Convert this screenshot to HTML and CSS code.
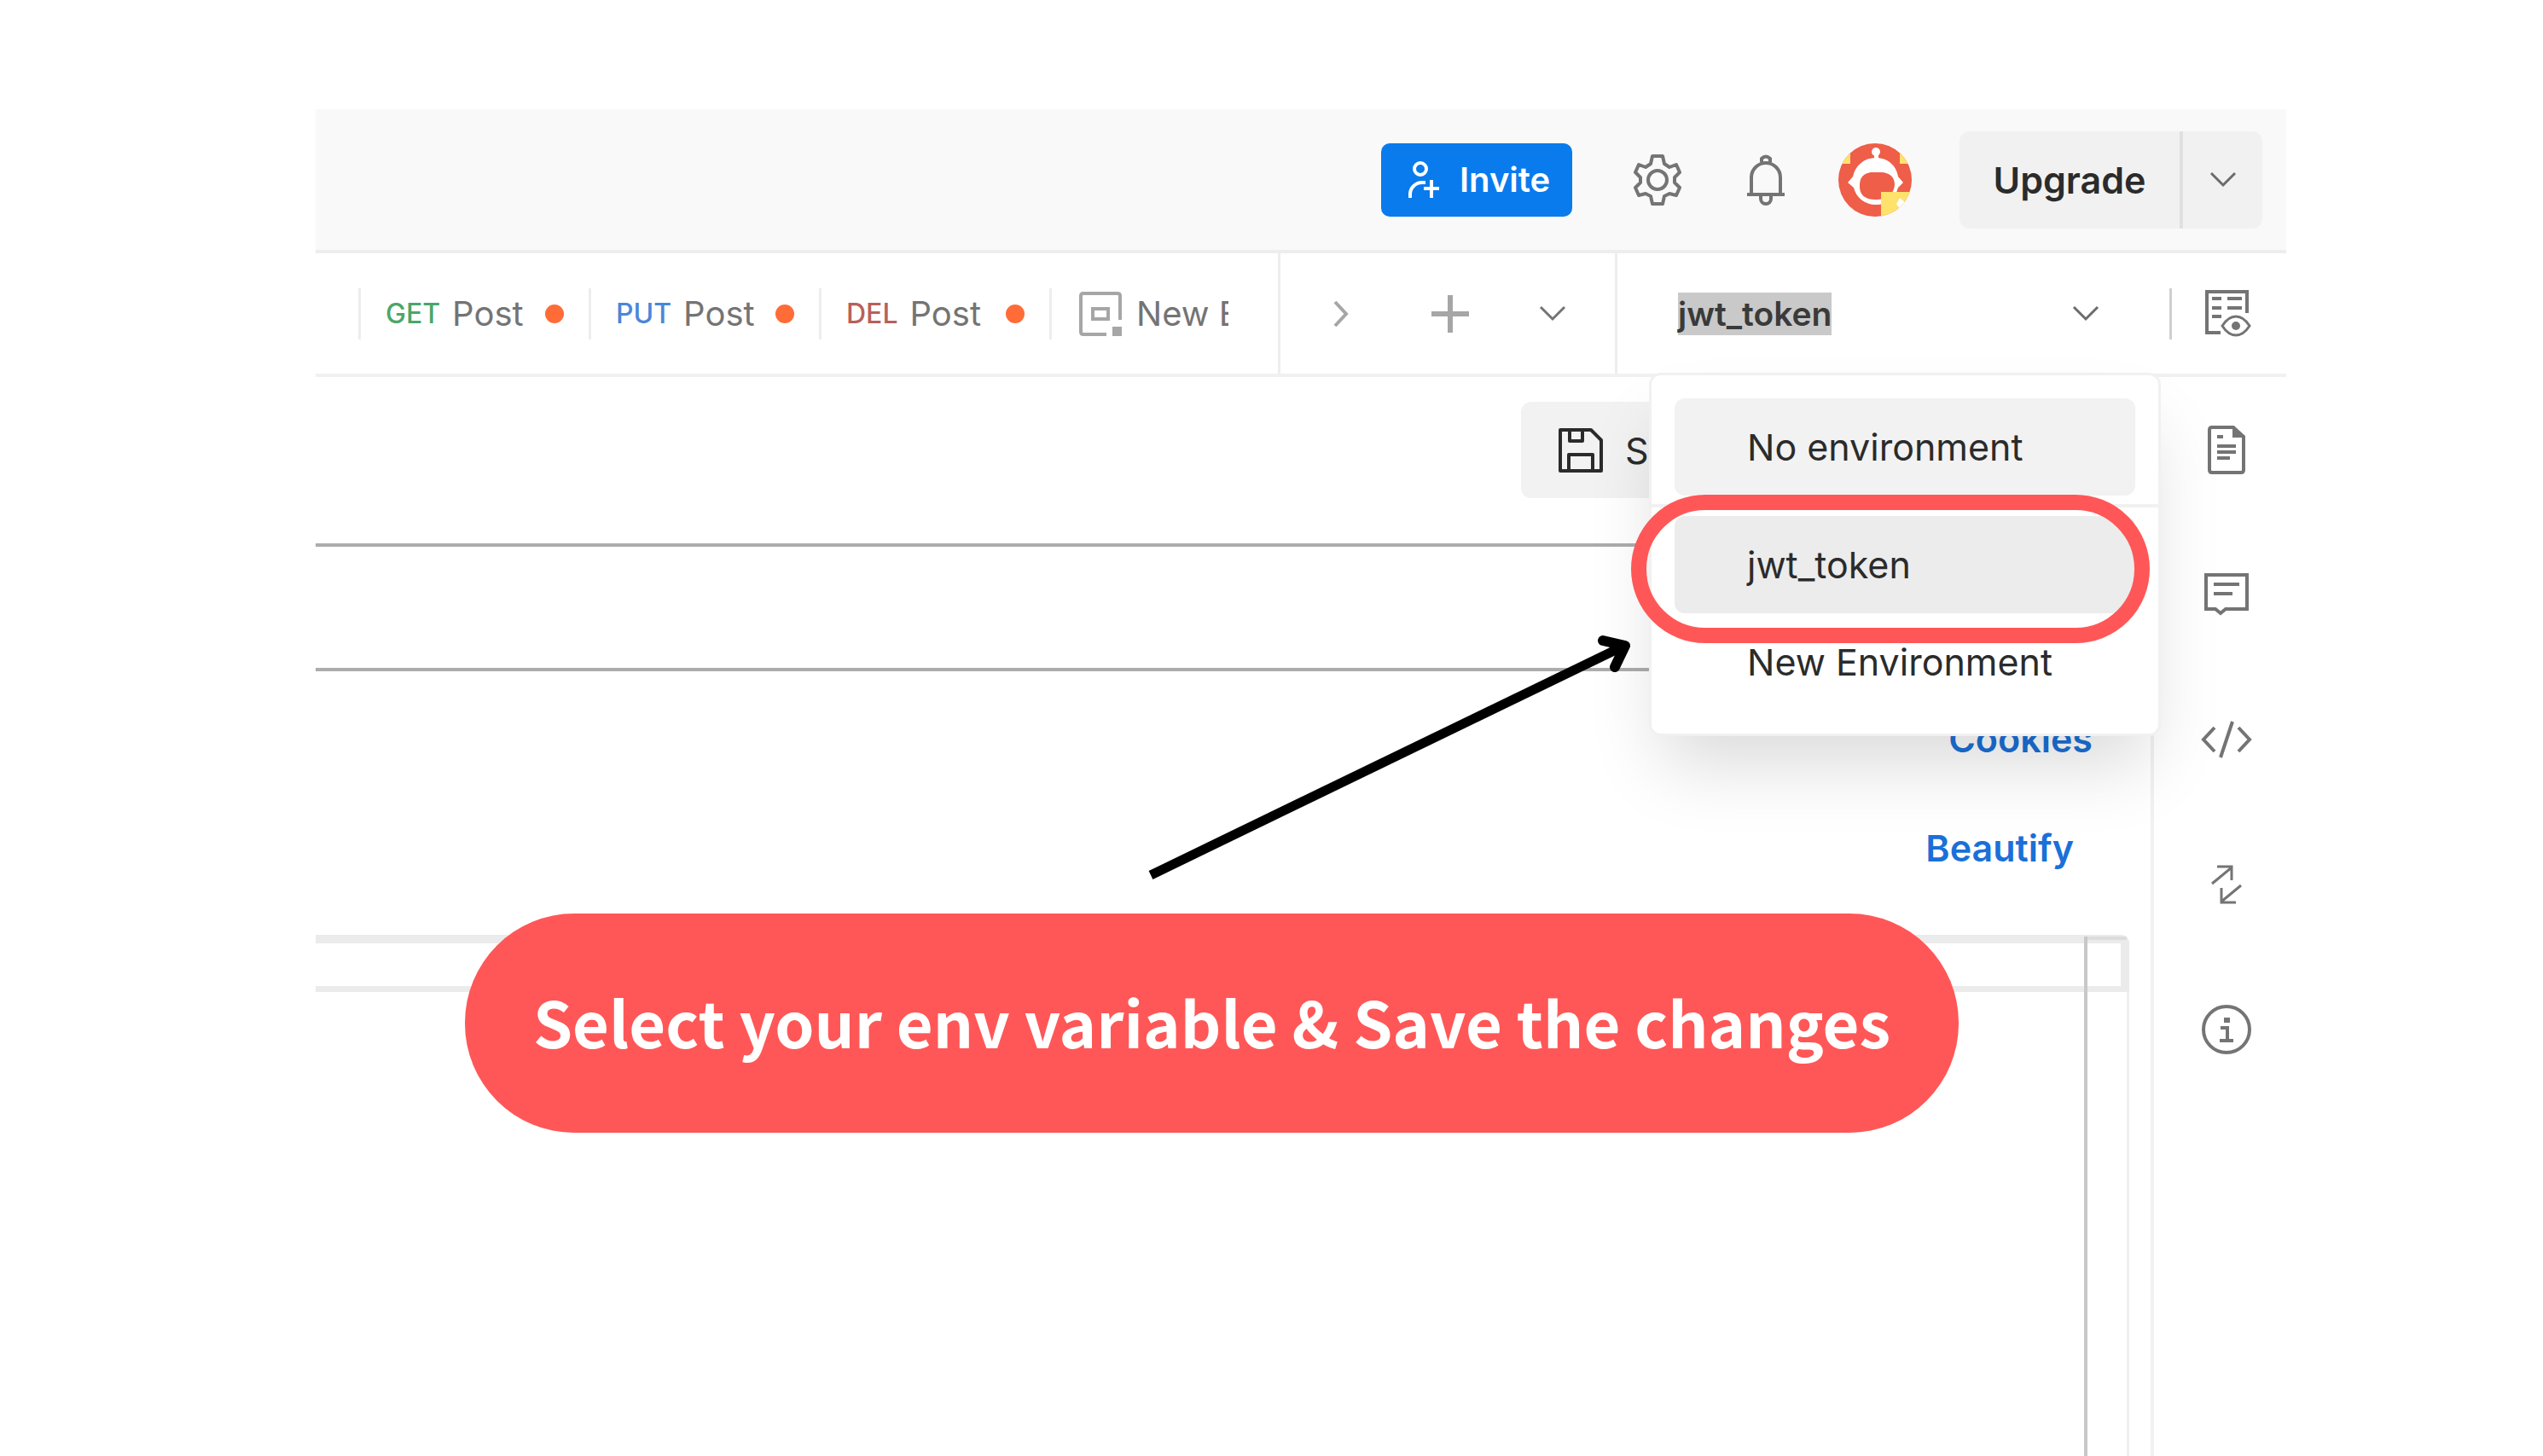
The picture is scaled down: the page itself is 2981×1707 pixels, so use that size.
FILE: index.html
```html
<!DOCTYPE html>
<html lang="en">
<head>
<meta charset="utf-8">
<title>Select environment</title>
<link rel="stylesheet" href="styles.css">
</head>
<body>
<div class="app">
  <header class="topbar">
    <button class="invite" type="button">
      <svg width="36" height="44" viewBox="0 0 36 44" fill="none" stroke="currentColor" stroke-width="4"><circle cx="14" cy="9" r="7"/><path d="M2 43V38a14 14 0 0 1 14-13h4M27 22v21M18 32h18"/></svg>
      <span>Invite</span>
    </button>
    <button class="icon-button gear" type="button" aria-label="Settings">
      <svg width="56" height="60" viewBox="0 0 56 60" fill="none" stroke="currentColor" stroke-width="4" stroke-linejoin="round"><circle cx="28" cy="30" r="11"/><path d="M22 2h12l2 9 6 4 8-3 4 9-6 6v6l6 6-4 9-8-2-6 3-2 9H22l-2-9-6-3-8 2-4-9 6-6v-6l-6-6 4-9 8 3 6-4z"/></svg>
    </button>
    <button class="icon-button bell" type="button" aria-label="Notifications">
      <svg width="44" height="60" viewBox="0 0 44 60" fill="none" stroke="currentColor" stroke-width="4"><path d="M5 47V27a17 17 0 0 1 34 0v20M0 47h44M17 9V5q5-5 10 0v4M16 48v4a6 6 0 0 0 12 0v-4"/></svg>
    </button>
    <button class="icon-button avatar" type="button" aria-label="Account">
      <svg width="86" height="86" viewBox="0 0 86 86"><clipPath id="face"><circle cx="43" cy="43" r="43"/></clipPath><g clip-path="url(#face)"><path fill="#ee5e48" d="M0 0h86v86H0z"/><path fill="#ffe26b" d="M0 9h14v15H0zM72 9h14v15H72z"/><circle cx="44" cy="10" r="5" fill="#fff"/><path fill="#fff" d="M42 9h5v12h-5z"/><path fill="#fff" d="M44 17c14 0 24 9 26 22l6 7-6 6c-3 12-13 20-26 20S21 64 18 52l-7-6 6-7c3-13 13-22 27-22z"/><path fill="#ee5e48" d="M38 34h14q14 2 14 15-2 17-22 17T25 49q0-13 13-15z"/><path fill="#ffe26b" d="M50 57h36v29H50z"/><path fill="#fff" d="m72 64 7 6-6 8-5-7z"/></g></svg>
    </button>
    <div class="upgrade">
      <button class="upgrade-main" type="button">Upgrade</button>
      <button class="upgrade-more" type="button" aria-label="Upgrade options"><svg width="32" height="20" viewBox="0 0 32 20" fill="none" stroke="currentColor" stroke-width="3"><path d="m2 2 14 14L30 2"/></svg></button>
    </div>
  </header>

  <nav class="tabbar">
    <div class="tabs">
      <button class="tab" type="button"><span class="method get">GET</span><span>Post</span><i class="dot"></i></button>
      <button class="tab" type="button"><span class="method put">PUT</span><span>Post</span><i class="dot"></i></button>
      <button class="tab" type="button"><span class="method del">DEL</span><span>Post</span><i class="dot"></i></button>
      <button class="tab tab-cut" type="button">
        <svg width="50" height="52" viewBox="0 0 50 52" fill="none" stroke="#a6a6a6" stroke-width="4"><path d="M48 33V5q0-3-3-3H5Q2 2 2 5v42q0 3 3 3h27"/><path d="M16 20h18v12H16z"/><path d="M39 41h11v11H39z" fill="#a6a6a6" stroke="none"/></svg>
        <span>New E</span>
      </button>
    </div>
    <div class="tab-tools">
      <button class="icon-button faint" type="button" aria-label="Scroll tabs"><svg width="18" height="32" viewBox="0 0 18 32" fill="none" stroke="currentColor" stroke-width="4"><path d="m2 2 13 14L2 30"/></svg></button>
      <button class="icon-button faint" type="button" aria-label="New tab"><svg width="44" height="44" viewBox="0 0 44 44" fill="none" stroke="currentColor" stroke-width="6"><path d="M22 0v44M0 22h44"/></svg></button>
      <button class="icon-button" type="button" aria-label="Tab list"><svg width="32" height="20" viewBox="0 0 32 20" fill="none" stroke="currentColor" stroke-width="3"><path d="m2 2 14 14L30 2"/></svg></button>
    </div>
    <div class="env">
      <button class="env-button" type="button" aria-haspopup="listbox" aria-expanded="true">
        <span class="selected-text">jwt_token</span>
        <svg width="32" height="20" viewBox="0 0 32 20" fill="none" stroke="currentColor" stroke-width="3"><path d="m2 2 14 14L30 2"/></svg>
      </button>
      <div class="menu">
        <button class="option active" type="button">No environment</button>
        <hr class="menu-rule">
        <div class="highlighted">
          <button class="option current" type="button">jwt_token</button>
          <div class="ring"></div>
        </div>
        <button class="option" type="button">New Environment</button>
        <svg class="arrow" width="576" height="300" viewBox="0 0 576 300" fill="none" stroke="#000"><path stroke-width="11" d="M11 287 562 20"/><path stroke-width="12" stroke-linecap="round" stroke-linejoin="round" d="m541 12 26 6-12 25"/></svg>
      </div>
    </div>
    <button class="icon-button quick-look" type="button" aria-label="Environment quick look">
      <svg width="54" height="56" viewBox="0 0 54 56" fill="none" stroke="currentColor" stroke-width="4"><path d="M49 27V2H2v48h16M8 10h11M26 10h17M8 21h11M26 21h17M8 31h11"/><path d="M20 42q7-11 16-11t16 11q-7 11-16 11T20 42z" stroke-width="3"/><circle cx="36" cy="42" r="5" fill="currentColor" stroke="none"/></svg>
    </button>
  </nav>

  <main class="workspace">
    <section class="request">
      <div class="actions">
        <button class="save" type="button">
          <svg width="52" height="52" viewBox="0 0 52 52" fill="none" stroke="currentColor" stroke-width="4" stroke-linejoin="round"><path d="M2 2h36l12 12v36H2z"/><path d="M13 3v12h15V3M12 49V31h28v18"/></svg>
          <span>Save</span>
        </button>
      </div>
      <input class="url" type="text" aria-label="Request URL">
      <a class="link cookies" href="#cookies">Cookies</a>
      <a class="link beautify" href="#beautify">Beautify</a>
      <div class="editor">
        <div class="current-line"></div>
        <div class="overview"></div>
      </div>
    </section>
    <aside class="rail">
      <button class="icon-button" type="button" aria-label="Documentation"><svg width="44" height="57" viewBox="0 0 44 57" fill="none" stroke="currentColor" stroke-width="4"><path d="M30 2H5Q2 2 2 5v47q0 3 3 3h34q3 0 3-3V13zM11 13h7M11 24h22M11 31h22M11 38h15"/><path d="M29 1v13h14z" fill="currentColor" stroke="none"/></svg></button>
      <button class="icon-button" type="button" aria-label="Comments"><svg width="52" height="50" viewBox="0 0 52 50" fill="none" stroke="currentColor" stroke-width="4"><path d="M2 2h48v40H25l-6 5-6-5H2zM11 13h30M11 24h22"/></svg></button>
      <button class="icon-button" type="button" aria-label="Code"><svg width="60" height="44" viewBox="0 0 60 44" fill="none" stroke="currentColor" stroke-width="4"><path d="M16 8 3 22l13 14M44 8l13 14-13 14M37 1 23 43"/></svg></button>
      <button class="icon-button" type="button" aria-label="Related requests"><svg width="36" height="46" viewBox="0 0 36 46" fill="none" stroke="currentColor" stroke-width="3"><path d="M1 22 24 3M7 2h17v16M35 24 12 43M12 27v17h17"/></svg></button>
      <button class="icon-button" type="button" aria-label="Info"><svg width="60" height="60" viewBox="0 0 60 60" fill="none" stroke="currentColor" stroke-width="4"><circle cx="30" cy="30" r="27"/><path d="M23 28h8v14M22 43h16"/><path d="M27 16h7v6h-7z" fill="currentColor" stroke="none"/></svg></button>
    </aside>
  </main>

  <div class="callout">Select your env variable &amp; Save the changes</div>
</div>
</body>
</html>
```

FILE: styles.css
```css
* { box-sizing: border-box; }

body {
  margin: 0;
  padding: 128px 301px 0 370px;
  background: #fff;
  color: #2b2b2b;
  font-family: Inter, "Liberation Sans", sans-serif;
  font-size: 43px;
  line-height: 52px;
}

button {
  margin: 0;
  padding: 0;
  border: 0;
  background: none;
  color: inherit;
  font: inherit;
  text-align: left;
  white-space: nowrap;
}

svg { display: block; flex: none; }

.app {
  position: relative;
  display: flex;
  flex-direction: column;
  min-height: calc(100vh - 128px);
}

.icon-button {
  display: flex;
  align-items: center;
  justify-content: center;
  color: #747474;
}
.icon-button.faint { color: #a6a6a6; }

/* Top bar */
.topbar {
  display: flex;
  align-items: center;
  justify-content: flex-end;
  height: 169px;
  padding-right: 28px;
  background: #f9f9f9;
  border-bottom: 4px solid #ededed;
}
.invite {
  display: flex;
  align-items: center;
  gap: 24px;
  width: 224px;
  height: 86px;
  padding-left: 32px;
  border-radius: 10px;
  background: #097bed;
  color: #fff;
  font-size: 40px;
  font-weight: 600;
}
.gear { margin-left: 72px; }
.bell { margin-left: 77px; }
.avatar { margin-left: 63px; }
.upgrade {
  display: flex;
  height: 114px;
  margin-left: 56px;
  border-radius: 12px;
  background: #f1f1f1;
}
.upgrade-main {
  width: 258px;
  text-align: center;
  font-weight: 600;
}
.upgrade-more {
  display: flex;
  align-items: center;
  justify-content: center;
  width: 97px;
  border-left: 4px solid #e0e0e0;
  color: #6b6b6b;
}

/* Tab bar */
.tabbar {
  display: flex;
  height: 145px;
  border-bottom: 4px solid #f1f1f1;
}
.tabs {
  display: flex;
  align-items: center;
  flex: 1;
  min-width: 0;
  padding: 0 58px 0 50px;
}
.tab {
  display: flex;
  align-items: center;
  flex: none;
  gap: 14px;
  width: 270px;
  height: 60px;
  padding: 0 29px;
  border-left: 3px solid #ededed;
  color: #747474;
  font-size: 40px;
}
.tab-cut {
  flex: 1 1 0;
  gap: 17px;
  min-width: 0;
  padding: 0 0 0 32px;
  overflow: hidden;
}
.method { font-size: 32px; font-weight: 500; }
.get { color: #4ba668; }
.put { color: #4a86d8; }
.del { color: #b8605a; }
.dot {
  width: 22px;
  height: 22px;
  margin-left: auto;
  border-radius: 50%;
  background: #ff6c37;
}
.tab-tools {
  display: grid;
  grid-template-columns: 142px 114px 126px;
  width: 395px;
  border-left: 3px solid #ededed;
}
.env {
  position: relative;
  width: 650px;
  border-left: 3px solid #ededed;
}
.env-button {
  display: flex;
  align-items: center;
  justify-content: space-between;
  width: 100%;
  height: 141px;
  padding: 0 82px 0 71px;
  color: #6b6b6b;
}
.selected-text {
  background: #c9c9c9;
  color: #3a3a3a;
  font-size: 39px;
  font-weight: 600;
  line-height: 50px;
}
.quick-look {
  align-self: center;
  width: 137px;
  height: 60px;
  padding-right: 2px;
  border-left: 3px solid #cfcfcf;
}

/* Environment menu */
.menu {
  position: absolute;
  z-index: 2;
  top: 140px;
  left: 37px;
  width: 600px;
  padding: 27px 0;
  border: 3px solid #f1f1f1;
  border-radius: 14px;
  background: #fff;
  box-shadow: 0 48px 80px -16px rgba(0, 0, 0, 0.15);
}
.option {
  display: block;
  width: 540px;
  height: 114px;
  margin: 0 27px;
  padding-left: 85px;
  border-radius: 12px;
}
.option.active { background: #f2f2f2; }
.option.current { background: #ececec; }
.menu-rule {
  height: 4px;
  margin: 10px 0;
  border: 0;
  background: #f1f1f1;
}
.highlighted { position: relative; }
.ring {
  position: absolute;
  inset: -25px 10px -35px -24px;
  border: 18px solid #ff5757;
  border-radius: 87px;
}
.arrow {
  position: absolute;
  top: 299px;
  right: 616px;
}

/* Workspace */
.workspace { display: flex; flex: 1; }
.request {
  display: flex;
  flex-direction: column;
  flex: 1;
  padding-top: 29px;
}
.actions {
  display: flex;
  justify-content: flex-end;
  padding-right: 470px;
}
.save {
  display: flex;
  align-items: center;
  gap: 26px;
  width: 268px;
  height: 113px;
  padding-left: 44px;
  border-radius: 12px;
  background: #f2f2f2;
}
.url {
  height: 150px;
  margin: 53px 500px 53px 0;
  padding: 0 32px;
  border: 4px solid #acacac;
  border-width: 4px 0;
  background: none;
  font: inherit;
}
.link {
  align-self: flex-end;
  color: #1a70d8;
  font-weight: 600;
  text-decoration: none;
}
.cookies { margin-right: 68px; }
.beautify { margin: 76px 90px 76px 0; }
.editor {
  position: relative;
  flex: 1;
  margin-right: 25px;
  border-right: 3px solid #efefef;
  border-top-right-radius: 10px;
}
.current-line {
  height: 67px;
  margin-right: -3px;
  border: solid #ebebeb;
  border-width: 10px 10px 7px 0;
  border-top-right-radius: 10px;
}
.overview {
  position: absolute;
  top: 2px;
  right: 0;
  bottom: 0;
  width: 50px;
  border: solid #c8c8c8;
  border-width: 0 0 0 4px;
  box-shadow: inset 0 4px #dcdcdc;
}

/* Right rail */
.rail {
  width: 159px;
  padding-left: 14px;
  border-left: 4px solid #f1f1f1;
}
.rail .icon-button { width: 100%; height: 170px; }

/* Callout */
.callout {
  position: absolute;
  z-index: 3;
  top: 943px;
  left: 175px;
  right: 384px;
  padding: 76px 0 81px;
  border-radius: 128px;
  background: #ff5757;
  color: #fff;
  font-family: "Noto Sans CJK JP", "Open Sans", sans-serif;
  font-size: 74px;
  font-weight: 700;
  line-height: 100px;
  text-align: center;
  white-space: nowrap;
}
```
